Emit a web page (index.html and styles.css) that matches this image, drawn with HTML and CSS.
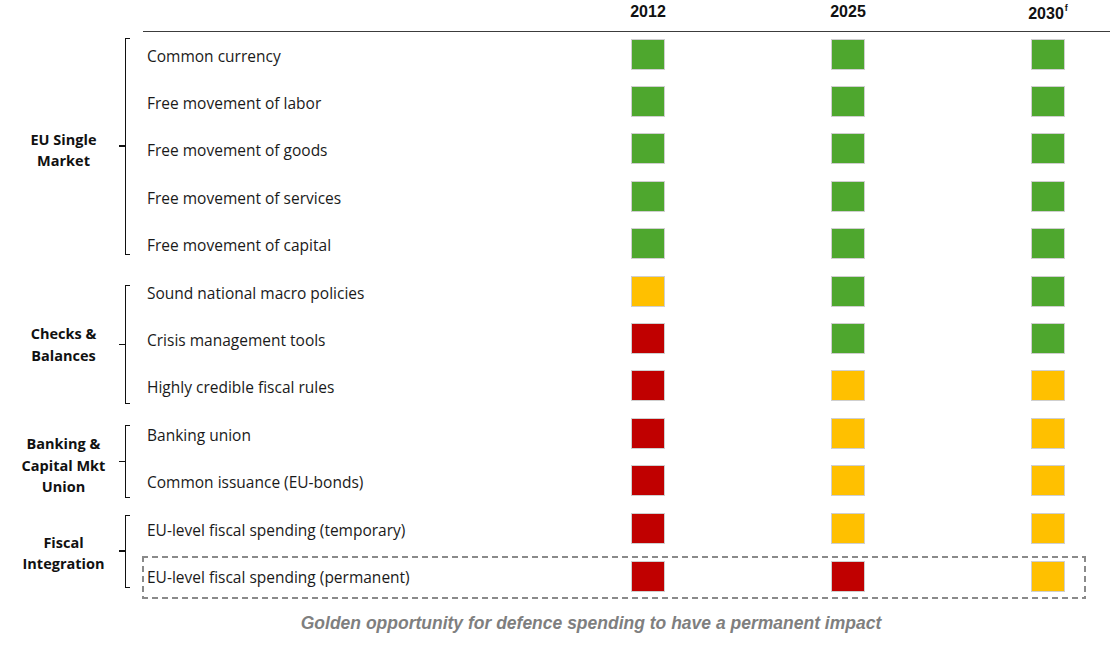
FILE: index.html
```html
<!DOCTYPE html>
<html lang="en">
<head>
<meta charset="utf-8">
<title>EU integration scorecard</title>
<link rel="stylesheet" href="styles.css">
</head>
<body>
<div class="chart">
  <div class="header">
    <div></div>
    <div class="year"><span>2012</span></div>
    <div class="year"><span>2025</span></div>
    <div class="year"><span>2030<sup>f</sup></span></div>
  </div>

  <div class="group g-eu">
    <div class="glabel">EU Single<br>Market</div>
    <div class="bracket"></div>
    <div class="rows">
      <div class="row"><div class="item">Common currency</div><div class="sq green"></div><div class="sq green"></div><div class="sq green"></div></div>
      <div class="row"><div class="item">Free movement of labor</div><div class="sq green"></div><div class="sq green"></div><div class="sq green"></div></div>
      <div class="row"><div class="item">Free movement of goods</div><div class="sq green"></div><div class="sq green"></div><div class="sq green"></div></div>
      <div class="row"><div class="item">Free movement of services</div><div class="sq green"></div><div class="sq green"></div><div class="sq green"></div></div>
      <div class="row"><div class="item">Free movement of capital</div><div class="sq green"></div><div class="sq green"></div><div class="sq green"></div></div>
    </div>
  </div>

  <div class="group g-cb">
    <div class="glabel">Checks &amp;<br>Balances</div>
    <div class="bracket"></div>
    <div class="rows">
      <div class="row"><div class="item">Sound national macro policies</div><div class="sq yellow"></div><div class="sq green"></div><div class="sq green"></div></div>
      <div class="row"><div class="item">Crisis management tools</div><div class="sq red"></div><div class="sq green"></div><div class="sq green"></div></div>
      <div class="row"><div class="item">Highly credible fiscal rules</div><div class="sq red"></div><div class="sq yellow"></div><div class="sq yellow"></div></div>
    </div>
  </div>

  <div class="group g-bk">
    <div class="glabel">Banking &amp;<br>Capital Mkt<br>Union</div>
    <div class="bracket"></div>
    <div class="rows">
      <div class="row"><div class="item">Banking union</div><div class="sq red"></div><div class="sq yellow"></div><div class="sq yellow"></div></div>
      <div class="row"><div class="item">Common issuance (EU-bonds)</div><div class="sq red"></div><div class="sq yellow"></div><div class="sq yellow"></div></div>
    </div>
  </div>

  <div class="group g-fi">
    <div class="glabel">Fiscal<br>Integration</div>
    <div class="bracket"></div>
    <div class="rows">
      <div class="row"><div class="item">EU-level fiscal spending (temporary)</div><div class="sq red"></div><div class="sq yellow"></div><div class="sq yellow"></div></div>
      <div class="row row-dashed"><div class="item">EU-level fiscal spending (permanent)</div><div class="sq red"></div><div class="sq red"></div><div class="sq yellow"></div></div>
    </div>
  </div>

  <div class="footer">Golden opportunity for defence spending to have a permanent impact</div>
</div>
</body>
</html>
```

FILE: styles.css
```css
html, body {
  margin: 0;
  padding: 0;
  background: #ffffff;
}

body {
  font-family: "Open Sans", "Liberation Sans", sans-serif;
  color: #1a1a1a;
}

.chart {
  width: 1110px;
}

.header {
  margin-left: 143px;
  height: 31px;
  border-bottom: 1.5px solid #3c3c3c;
  display: grid;
  grid-template-columns: 488px 200px 200px 1fr;
  font-family: "Liberation Sans", Arial, sans-serif;
  font-weight: bold;
  font-size: 16px;
  line-height: 19px;
  color: #111;
}

.year {
  width: 34px;
  display: flex;
  justify-content: center;
  white-space: nowrap;
  padding-top: 2px;
}

.year:last-child {
  padding-top: 4px;
}

.year sup {
  font-size: 9px;
  line-height: 0;
  vertical-align: 8px;
  margin-left: 1px;
}

.group {
  display: flex;
}

.glabel {
  width: 111px;
  padding-left: 8px;
  align-self: center;
  text-align: center;
  font-weight: 700;
  font-size: 14.5px;
  line-height: 21.5px;
  color: #111;
}

.bracket {
  position: relative;
  box-sizing: border-box;
  margin-left: 6px;
  width: 5px;
  border-left: 1.5px solid #111;
  border-top: 1.5px solid #111;
  border-bottom: 1.5px solid #111;
}

.bracket::before {
  content: "";
  position: absolute;
  left: -7px;
  top: calc(50% - 1px);
  width: 6px;
  height: 1.5px;
  background: #111;
}

.g-eu .bracket { margin-top: 6px; margin-bottom: 14px; }
.g-cb .bracket { margin-top: 16px; margin-bottom: 7px; }
.g-bk .bracket { margin-top: 14px; margin-bottom: 8px; }
.g-fi .bracket { margin-top: 9px; margin-bottom: 13px; }

.g-cb .glabel { padding-top: 9px; }
.g-bk .glabel { padding-top: 14px; }

.rows {
  margin-left: 13px;
  width: 943px;
}

.row {
  box-sizing: border-box;
  height: 47.4px;
  padding-left: 4px;
  display: grid;
  grid-template-columns: 484px 200px 200px 1fr;
  align-items: center;
}

.item {
  font-size: 15.5px;
  color: #1a1a1a;
  white-space: nowrap;
}

.sq {
  box-sizing: border-box;
  width: 34px;
  height: 31px;
  border: 1.5px solid #cfcfcf;
  margin-bottom: 3px;
}

.green { background: #4ea72e; }
.red { background: #c00000; }
.yellow { background: #ffc000; }

.row-dashed {
  height: 43px;
  margin-top: 2.6px;
  margin-bottom: 1.8px;
  margin-left: -1px;
  padding-left: 5px;
  background:
    repeating-linear-gradient(90deg, #8a8a8a 0 6px, transparent 6px 10px) left top / 100% 2px no-repeat,
    repeating-linear-gradient(90deg, #8a8a8a 0 6px, transparent 6px 10px) left bottom / 100% 2px no-repeat,
    repeating-linear-gradient(180deg, #8a8a8a 0 6px, transparent 6px 10px) left top / 2px 100% no-repeat,
    repeating-linear-gradient(180deg, #8a8a8a 0 6px, transparent 6px 10px) right top / 2px 100% no-repeat;
}

.row-dashed .sq {
  margin-bottom: 2px;
}

.footer {
  margin-left: 72px;
  padding-top: 11px;
  text-align: center;
  font-family: "Liberation Sans", Arial, sans-serif;
  font-weight: 700;
  font-style: italic;
  font-size: 17.5px;
  line-height: 22px;
  color: #7f7f7f;
}
```
